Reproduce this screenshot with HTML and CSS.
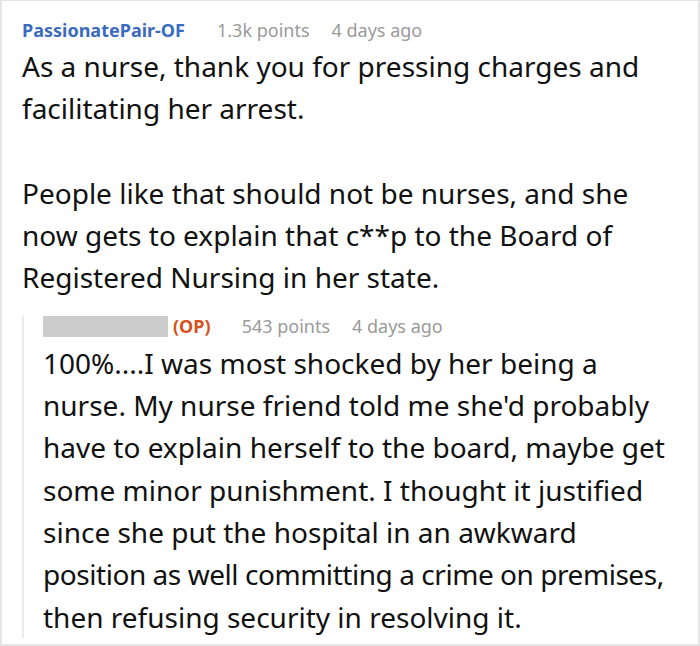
FILE: index.html
```html
<!DOCTYPE html>
<html lang="en">
<head>
<meta charset="utf-8">
<title>Comment</title>
<link rel="stylesheet" href="styles.css">
</head>
<body>
<div class="card">
  <div class="comment">
    <div class="meta">
      <span class="author">PassionatePair-OF</span>
      <span class="points">1.3k points</span>
      <span class="time">4 days ago</span>
    </div>
    <div class="body">
      <p>As a nurse, thank you for pressing charges and facilitating her arrest.</p>
      <p>People like that should not be nurses, and she now gets to explain that c**p to the Board of Registered Nursing in her state.</p>
    </div>
    <div class="reply">
      <div class="meta reply-meta">
        <span class="redacted"></span>
        <span class="op">(OP)</span>
        <span class="points">543 points</span>
        <span class="time">4 days ago</span>
      </div>
      <div class="body reply-body">
        <p>100%....I was most shocked by her being a nurse. My nurse friend told me she'd probably have to explain herself to the board, maybe get some minor punishment. I thought it justified since she put the hospital in an awkward <span class="tight">position as well committing a crime on premises,</span> then refusing security in resolving it.</p>
      </div>
    </div>
  </div>
</div>
</body>
</html>
```
FILE: styles.css
```css
html, body {
  margin: 0;
  padding: 0;
  background: #ffffff;
}
.card {
  box-sizing: border-box;
  width: 700px;
  height: 646px;
  border: 2px solid #e6e6e6;
  border-top-width: 1px;
  overflow: hidden;
  font-family: "Noto Sans", "Open Sans", sans-serif;
  color: #111111;
}
.comment {
  padding: 16px 20px 0 20px;
}
.meta {
  display: flex;
  align-items: center;
  font-size: 18px;
  line-height: 26px;
  color: #9a9a9a;
  margin-bottom: 2px;
}
.author {
  color: #3a6bbf;
  font-weight: 700;
  margin-right: 32px;
}
.points {
  margin-right: 22px;
}
.body {
  font-size: 28px;
  line-height: 42.3px;
}
.body p {
  margin: 0 0 42.3px 0;
}
.comment > .body p:last-child {
  margin-bottom: 17px;
}
.reply {
  border-left: 2px solid #ebebeb;
  padding-left: 19px;
}
.reply-meta {
  height: 21px;
  line-height: 21px;
  margin-bottom: 5px;
}
.reply-body {
  margin-bottom: -12px;
}
.reply .body p {
  margin: 0;
}
.tight {
  letter-spacing: -0.45px;
}
.redacted {
  display: inline-block;
  width: 125px;
  height: 21px;
  background: #cccccc;
  margin-right: 5px;
}
.op {
  color: #d5541e;
  font-weight: 700;
  margin-right: 31px;
}
```
